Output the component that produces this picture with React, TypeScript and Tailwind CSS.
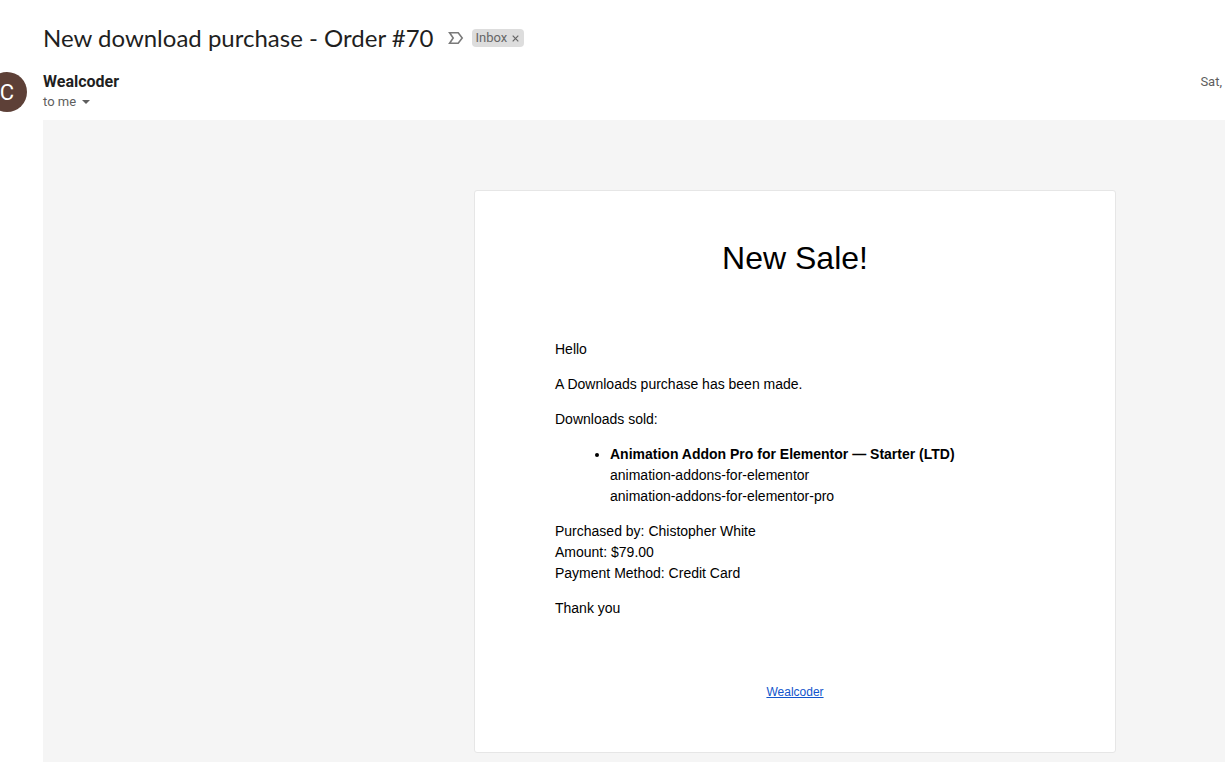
import React from 'react';

const products = [
  {
    name: 'Animation Addon Pro for Elementor — Starter (LTD)',
    files: ['animation-addons-for-elementor', 'animation-addons-for-elementor-pro'],
  },
];

const SubjectBar: React.FC = () => (
  <header className="flex items-center pt-5 pl-[43px]">
    <h1 className="font-['Lato',sans-serif] text-2xl leading-9 text-[#1f1f1f]">
      New download purchase - Order #70
    </h1>
    <button type="button" aria-label="Mark as important" className="ml-3 text-[#7a7a7a]">
      <svg width="18" height="14" viewBox="0 0 18 14" fill="none" stroke="currentColor" strokeWidth="1.6">
        <path d="M3.6 1.8H12.2L16.2 7L12.2 12.2H3.6L7.2 7Z" />
      </svg>
    </button>
    <div className="ml-2 flex h-[18px] items-center rounded bg-[#dddddd] px-1 font-['Roboto',sans-serif] text-[13px] text-[#666666]">
      <span>Inbox</span>
      <button type="button" aria-label="Remove label Inbox" className="ml-1">
        <svg width="9" height="8" viewBox="0 0 9 8" fill="none" stroke="currentColor" strokeWidth="1.2">
          <path d="M1.7 1.7L7.3 7.3M7.3 1.7L1.7 7.3" />
        </svg>
      </button>
    </div>
  </header>
);

const SenderRow: React.FC = () => (
  <div className="flex pt-4 pb-2 font-['Roboto',sans-serif]">
    {/* Avatar is cut off by the left edge */}
    <div className="-ml-[13px] flex size-10 shrink-0 items-center justify-center rounded-full bg-[#5d4037] text-[22px] text-white">
      C
    </div>
    <div className="ml-4 grow">
      <p className="text-base leading-5 font-bold text-[#1f1f1f]">Wealcoder</p>
      <button type="button" className="flex items-center text-[13px] leading-5 text-[#5e5e5e]">
        to me
        <svg className="ml-1.5" width="8" height="4" viewBox="0 0 8 4" fill="currentColor">
          <path d="M0 0H8L4 4Z" />
        </svg>
      </button>
    </div>
    <p className="pr-[3px] text-[13px] leading-5 text-[#5e5e5e]">Sat,</p>
  </div>
);

const SaleCard: React.FC = () => (
  <article className="w-full max-w-[642px] rounded-[3px] border border-[#e6e6e6] bg-white pt-11 pb-[50px] text-black">
    <h2 className="text-center text-[32px] leading-[46px]">New Sale!</h2>

    <div className="px-20 pt-[58px] text-sm leading-[21px]">
      <p className="mb-3.5">Hello</p>
      <p className="mb-3.5">A Downloads purchase has been made.</p>
      <p className="mb-3.5">Downloads sold:</p>
      <ul className="mb-3.5 list-disc pl-[55px]">
        {products.map((product) => (
          <li key={product.name}>
            <strong>{product.name}</strong>
            {product.files.map((file) => (
              <div key={file}>{file}</div>
            ))}
          </li>
        ))}
      </ul>
      <p className="mb-3.5">
        Purchased by: Chistopher White
        <br />
        Amount: $79.00
        <br />
        Payment Method: Credit Card
      </p>
      <p>Thank you</p>
    </div>

    <p className="pt-[63px] text-center text-xs leading-5">
      <a href="#" className="text-[#1155cc] underline">
        Wealcoder
      </a>
    </p>
  </article>
);

const App: React.FC = () => {
  return (
    <div className="flex min-h-screen flex-col overflow-x-hidden bg-white">
      <SubjectBar />
      <SenderRow />
      <main className="ml-[43px] flex grow items-start justify-center bg-[#f5f5f5] pt-[70px] pb-2 pl-[322px] font-['Liberation_Sans',Arial,sans-serif]">
        <SaleCard />
      </main>
    </div>
  );
};

export default App;
